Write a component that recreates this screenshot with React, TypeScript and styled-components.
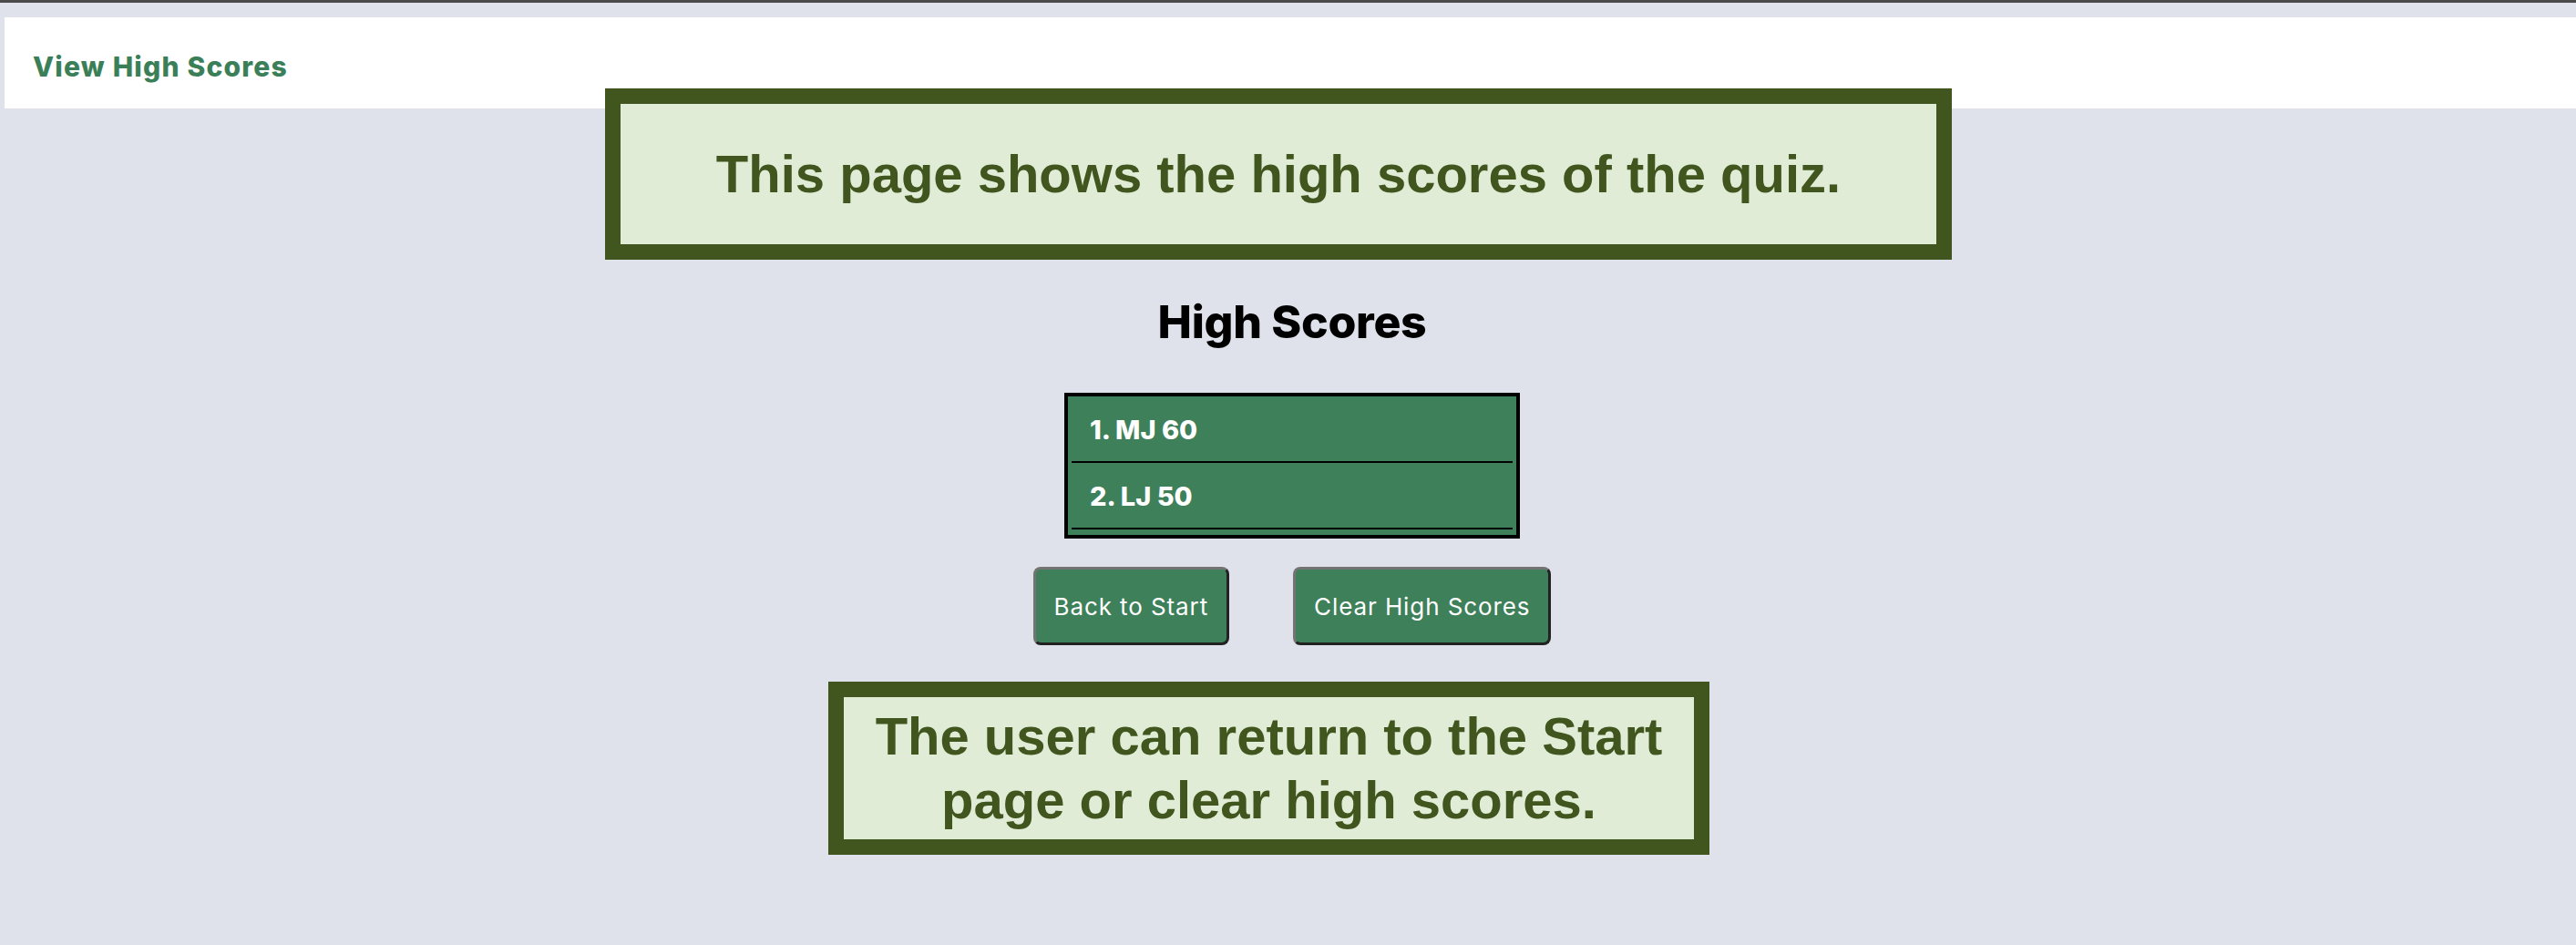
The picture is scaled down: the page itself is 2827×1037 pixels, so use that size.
import styled, { createGlobalStyle } from 'styled-components';

const GlobalStyle = createGlobalStyle`
    html, body {
        margin: 0;
        padding: 0;
        background: #dfe1eb;
    }
    body {
        border-top: 3px solid #4a4a4a;
        font-family: Inter, "Noto Sans", sans-serif;
        min-height: 1034px;
    }
`;

const Page = styled.div`
    position: relative;
    display: flex;
    flex-direction: column;
`;

const Header = styled.header`
    margin: 16px 0 0 5px;
    height: 100px;
    background: #ffffff;
    display: flex;
    align-items: center;
    padding: 8px 31px 0;
    box-sizing: border-box;
`;

const NavLink = styled.a`
    color: #3a7f57;
    font-weight: 800;
    font-size: 30px;
    letter-spacing: 1.2px;
    text-decoration: none;
`;

const Main = styled.main`
    display: flex;
    flex-direction: column;
    align-items: center;
    padding: 204px 0 0 9px;
`;

const Heading = styled.h1`
    margin: 0;
    font-size: 50px;
    line-height: 60px;
    font-weight: 800;
    color: #000;
    letter-spacing: -0.3px;
`;

const ScoreList = styled.ol`
    list-style: none;
    margin: 48px 0 0;
    width: 500px;
    height: 160px;
    box-sizing: border-box;
    border: 4px solid #000;
    background: #3d8059;
    padding: 0 4px 6px;
`;

const ScoreItem = styled.li`
    height: 73px;
    box-sizing: border-box;
    border-bottom: 2px solid #000;
    display: flex;
    align-items: center;
    padding: 2px 20px 0;
    color: #fff;
    font-size: 29px;
    font-weight: 800;
    white-space: pre;
`;

const ButtonRow = styled.div`
    display: flex;
    gap: 70px;
    margin-top: 31px;
`;

const Button = styled.button`
    height: 86px;
    box-sizing: border-box;
    padding: 0 20px;
    border: 3px solid;
    border-color: #737373 #222 #222 #737373;
    border-radius: 8px;
    background: #3d8059;
    color: #fff;
    font-family: Inter, "Noto Sans", sans-serif;
    font-size: 26px;
    font-weight: 400;
    letter-spacing: 0.9px;
    cursor: pointer;
`;

const Note = styled.div<{ $top: number; $left: number; $width: number; $pad: string }>`
    position: absolute;
    top: ${p => p.$top}px;
    left: ${p => p.$left}px;
    width: ${p => p.$width}px;
    box-sizing: border-box;
    border: 17px solid #41561f;
    background: #e0ecd6;
    padding: ${p => p.$pad};
    color: #41561f;
    font-family: "Liberation Sans", Arial, sans-serif;
    font-weight: 700;
    font-size: 58px;
    line-height: 70px;
    text-align: center;
`;

export default function App() {
    return (
        <>
            <GlobalStyle />
            <Page>
                <Header>
                    <NavLink href="#">View High Scores</NavLink>
                </Header>
                <Main>
                    <Heading>High Scores</Heading>
                    <ScoreList>
                        <ScoreItem>1. MJ 60</ScoreItem>
                        <ScoreItem>2. LJ 50</ScoreItem>
                    </ScoreList>
                    <ButtonRow>
                        <Button>Back to Start</Button>
                        <Button>Clear High Scores</Button>
                    </ButtonRow>
                </Main>
                <Note $top={94} $left={664} $width={1478} $pad="42px 20px">
                    This page shows the high scores of the quiz.
                </Note>
                <Note $top={745} $left={909} $width={967} $pad="8px 20px">
                    The user can return to the Start page or clear high scores.
                </Note>
            </Page>
        </>
    );
}
